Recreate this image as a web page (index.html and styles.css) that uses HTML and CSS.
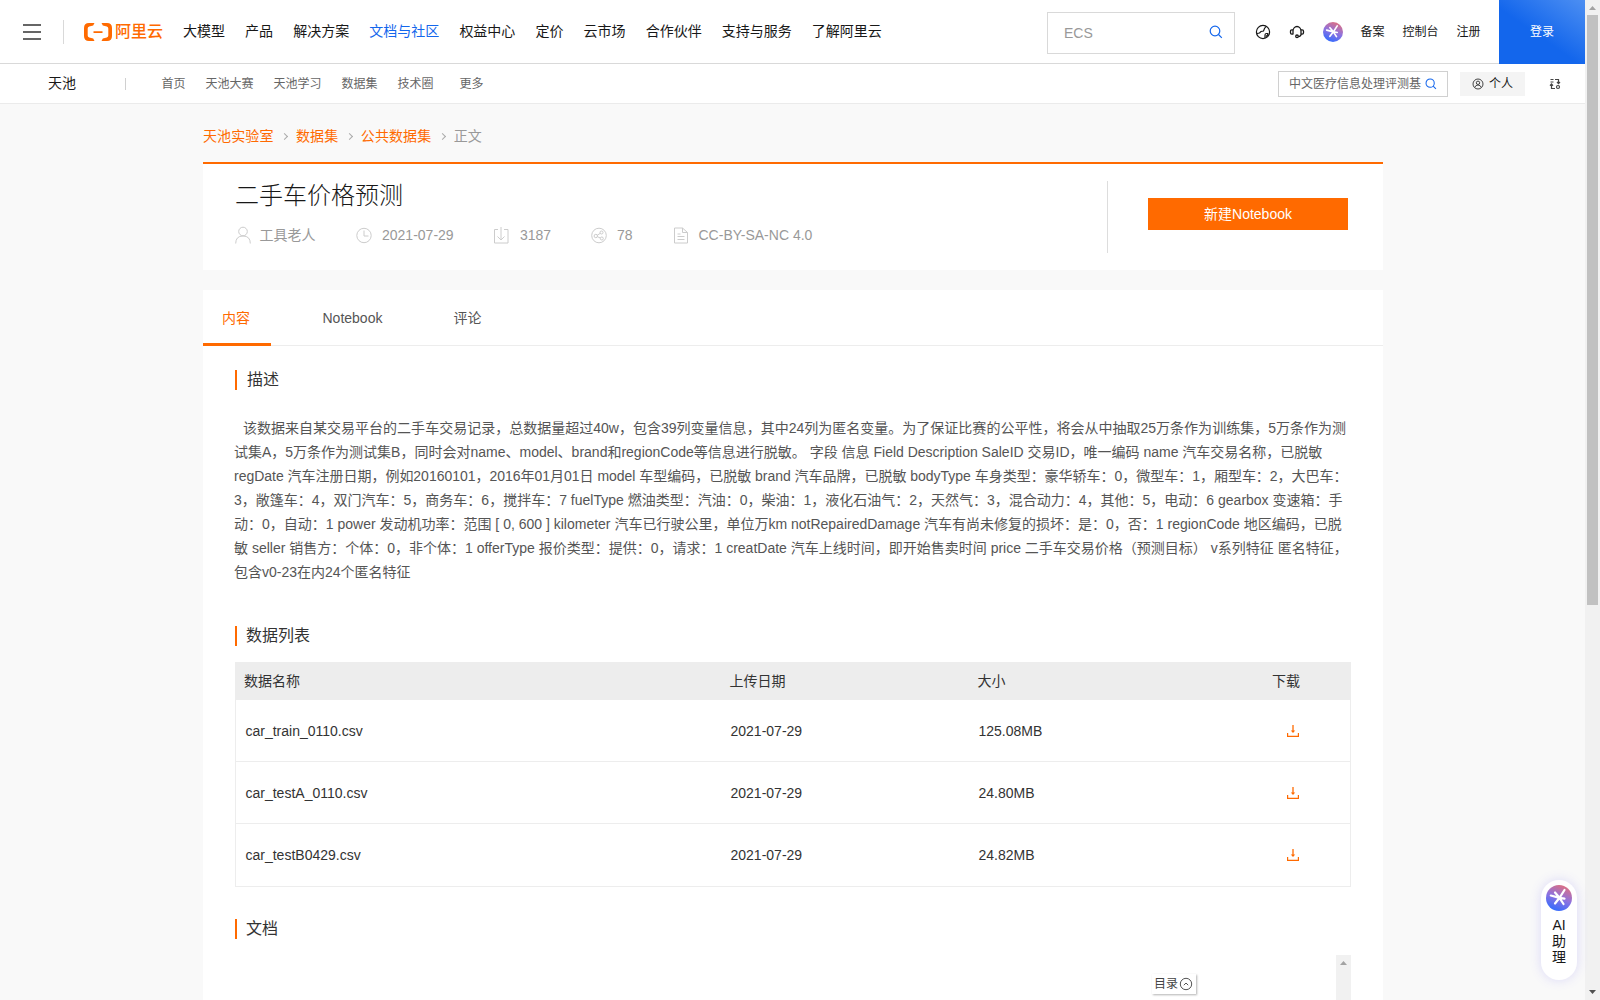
FILE: index.html
```html
<!DOCTYPE html>
<html lang="zh-CN">
<head>
<meta charset="utf-8">
<title>二手车价格预测</title>
<link rel="stylesheet" href="styles.css">
</head>
<body>
<svg class="defs" width="0" height="0">
  <defs>
    <linearGradient id="ai-fill" x1="0.3" y1="1" x2="0.7" y2="0">
      <stop offset="0" stop-color="#2f6bff"/>
      <stop offset="0.5" stop-color="#8d72e0"/>
      <stop offset="1" stop-color="#e0707f"/>
    </linearGradient>
    <symbol id="ai" viewBox="0 0 26 26">
      <circle cx="13" cy="13" r="13" fill="url(#ai-fill)"/>
      <path d="M18.500 5 13.500 12.800 9 18.500M4.800 10.500l8.700 2.300 5 .8M13.500 12.800 17.500 19M9 7.500l4.500 5.300" fill="none" stroke="#fff" stroke-width="2.200" stroke-linecap="round"/>
    </symbol>
    <symbol id="search" viewBox="0 0 14 14">
      <circle cx="6" cy="6" r="4.800" fill="none" stroke="currentColor" stroke-width="1.200"/>
      <path d="m9.500 9.500 3.300 3.300" stroke="currentColor" stroke-width="1.200"/>
    </symbol>
    <symbol id="download" viewBox="0 0 12 12">
      <path d="M6 0v7" fill="none" stroke="currentColor" stroke-width="1.300"/>
      <path d="M3.800 5.500h4.400L6 8z" fill="currentColor"/>
      <path d="M.6 8v3.300h10.800V8" fill="none" stroke="currentColor" stroke-width="1.200"/>
    </symbol>
  </defs>
</svg>

<div class="window">
  <div class="page">
    <header class="topbar">
      <div class="burger"><i></i><i></i><i></i></div>
      <div class="logo">
        <svg width="28" height="18" viewBox="0 0 28 18"><path d="M10.500 0H5Q0 0 0 5v8q0 5 5 5h5.500l-1.300-2.600-4-1Q3.700 14 3.700 12.500v-7Q3.700 4 5.200 3.600l4-1zM17.500 0H23q5 0 5 5v8q0 5-5 5h-5.500l1.300-2.600 4-1q1.500-.4 1.500-1.900v-7q0-1.500-1.500-1.900l-4-1zM9.500 8.200h9v1.700h-9z" fill="#ff6a00"/></svg>
        <b>阿里云</b>
      </div>
      <nav class="menu">
        <a>大模型</a><a>产品</a><a>解决方案</a><a class="on">文档与社区</a><a>权益中心</a><a>定价</a><a>云市场</a><a>合作伙伴</a><a>支持与服务</a><a>了解阿里云</a>
      </nav>
      <div class="search"><span>ECS</span><svg class="blue" width="14" height="14"><use href="#search"/></svg></div>
      <svg class="globe" width="16" height="16" viewBox="0 0 16 16" fill="none" stroke="#181818" stroke-width="1.200"><circle cx="8" cy="8" r="6.600"/><path d="M2 9.500 4.500 9 6 7.500 8.500 7 9.500 4.500 11 2.500M10 14v-3q0-1.500 1.500-1.500h1.200v1.500L11 12.500"/></svg>
      <svg class="headset" width="16" height="16" viewBox="0 0 16 16" fill="none" stroke="#181818" stroke-width="1.300"><path d="M4 10.500V7a4 4.500 0 0 1 8 0v3.500q0 1.800-2.500 2M4 5.800H2.800q-1.300 0-1.300 1.400v1.600q0 1.400 1.300 1.400H4M12 5.800h1.200q1.300 0 1.300 1.400v1.600q0 1.400-1.300 1.400H12"/><circle cx="8" cy="12.300" r="1.300"/></svg>
      <svg class="ai-top" width="20" height="20"><use href="#ai"/></svg>
      <nav class="account"><a>备案</a><a>控制台</a><a>注册</a></nav>
      <a class="login">登录</a>
    </header>

    <div class="subbar">
      <span class="product">天池</span><i class="sep"></i>
      <nav class="submenu"><a>首页</a><a>天池大赛</a><a>天池学习</a><a>数据集</a><a>技术圈</a><a class="more">更多</a></nav>
      <div class="subsearch"><span>中文医疗信息处理评测基</span><svg class="blue" width="12" height="12"><use href="#search"/></svg></div>
      <div class="person">
        <svg width="12" height="12" viewBox="0 0 12 12" fill="none" stroke="#444"><circle cx="6" cy="6" r="5"/><circle cx="6" cy="4.800" r="1.700"/><path d="M2.700 9.500Q3.500 7 6 7t3.300 2.500"/></svg>
        <span>个人</span>
      </div>
      <svg class="swap" width="12" height="12" viewBox="0 0 12 12" fill="none" stroke="#444" stroke-width="1.200"><path d="M1.500 1.500h3M1.500 4h3M6 1.500h3.500v4M8 4l1.500 1.700L11 4M2.500 6v4.500H6M1 7.700 2.500 6 4 7.700"/><circle cx="9" cy="9" r="1.500"/></svg>
    </div>

    <main>
      <div class="crumbs"><a>天池实验室</a><i></i><a>数据集</a><i></i><a>公共数据集</a><i></i><span>正文</span></div>

      <section class="summary">
        <div class="info">
          <h1>二手车价格预测</h1>
          <div class="meta">
            <div class="m1"><svg width="16" height="18" viewBox="0 0 16 18"><circle cx="8" cy="5.500" r="4.300"/><path d="M.7 17.500q0-7.500 7.300-7.500t7.300 7.500"/></svg>工具老人</div>
            <div class="m2"><svg width="16" height="18" viewBox="0 0 16 18"><circle cx="8" cy="9.500" r="7.200"/><path d="M8 4.500v5.500h4.500"/></svg>2021-07-29</div>
            <div class="m3"><svg width="16" height="18" viewBox="0 0 16 18"><path d="M5 3.500H1.500v13.500h13.500v-13.500h-4M8 1v12.500M4.500 10.500 8 14l3.500-3.500"/></svg>3187</div>
            <div class="m4"><svg width="16" height="18" viewBox="0 0 16 18"><circle cx="8" cy="9.500" r="7.300"/><circle cx="4.800" cy="10" r="1.700"/><circle cx="10.500" cy="6.500" r="1.500"/><circle cx="10.800" cy="12.500" r="1.500"/><path d="m6.300 9.200 3-1.900M6.400 10.700l3 1.300"/></svg>78</div>
            <div class="m5"><svg width="16" height="18" viewBox="0 0 16 18"><path d="M1.500 2h8l5 4.500V17h-13zM9.500 2v4.500h5M4.500 8h3M4.500 10.500h7M4.500 13.500h7"/></svg>CC-BY-SA-NC 4.0</div>
          </div>
        </div>
        <div class="action"><a class="create">新建Notebook</a></div>
      </section>

      <section class="detail">
        <nav class="tabs"><a class="on">内容</a><a class="t2">Notebook</a><a class="t3">评论</a></nav>

        <h2 class="h-desc">描述</h2>
        <p class="desc">
          <span class="first">该数据来自某交易平台的二手车交易记录，总数据量超过40w，包含39列变量信息，其中24列为匿名变量。为了保证比赛的公平性，将会从中抽取25万条作为训练集，5万条作为测</span>
          <span>试集A，5万条作为测试集B，同时会对name、model、brand和regionCode等信息进行脱敏。 字段 信息 Field Description SaleID 交易ID，唯一编码 name 汽车交易名称，已脱敏</span>
          <span class="tight">regDate 汽车注册日期，例如20160101，2016年01月01日 model 车型编码，已脱敏 brand 汽车品牌，已脱敏 bodyType 车身类型：豪华轿车：0，微型车：1，厢型车：2，大巴车：</span>
          <span>3，敞篷车：4，双门汽车：5，商务车：6，搅拌车：7 fuelType 燃油类型：汽油：0，柴油：1，液化石油气：2，天然气：3，混合动力：4，其他：5，电动：6 gearbox 变速箱：手</span>
          <span>动：0，自动：1 power 发动机功率：范围 [ 0, 600 ] kilometer 汽车已行驶公里，单位万km notRepairedDamage 汽车有尚未修复的损坏：是：0，否：1 regionCode 地区编码，已脱</span>
          <span>敏 seller 销售方：个体：0，非个体：1 offerType 报价类型：提供：0，请求：1 creatDate 汽车上线时间，即开始售卖时间 price 二手车交易价格（预测目标） v系列特征 匿名特征，</span>
          <span>包含v0-23在内24个匿名特征</span>
        </p>

        <h2 class="h-list">数据列表</h2>
        <div class="table">
          <div class="row head"><span>数据名称</span><span>上传日期</span><span>大小</span><span>下载</span></div>
          <div class="row"><span>car_train_0110.csv</span><span>2021-07-29</span><span>125.08MB</span><svg width="12" height="12"><use href="#download"/></svg></div>
          <div class="row"><span>car_testA_0110.csv</span><span>2021-07-29</span><span>24.80MB</span><svg width="12" height="12"><use href="#download"/></svg></div>
          <div class="row last"><span>car_testB0429.csv</span><span>2021-07-29</span><span>24.82MB</span><svg width="12" height="12"><use href="#download"/></svg></div>
        </div>

        <h2 class="h-doc">文档</h2>
        <div class="doc">
          <div class="toc"><span>目录</span><svg width="14" height="14" viewBox="0 0 14 14" fill="none" stroke="#555"><circle cx="7" cy="7" r="5.700"/><path d="M4.800 8.200 7 6l2.200 2.200"/></svg></div>
          <div class="inner-scroll"><svg width="7" height="4" viewBox="0 0 7 4"><path d="M0 4 3.500 0 7 4z" fill="#a3a3a3"/></svg></div>
        </div>
      </section>
    </main>
  </div>

  <div class="scrollbar">
    <svg width="7" height="4" viewBox="0 0 7 4"><path d="M0 4 3.500 0 7 4z" fill="#a3a3a3"/></svg>
    <div class="thumb"></div>
    <svg width="7" height="4" viewBox="0 0 7 4"><path d="M0 0h7L3.500 4z" fill="#505050"/></svg>
  </div>
</div>

<aside class="assistant"><svg width="26" height="26"><use href="#ai"/></svg><span>AI</span><span>助</span><span>理</span></aside>
</body>
</html>
```

FILE: styles.css
```css
* { box-sizing: border-box; }
body {
  margin: 0;
  height: 1000px;
  overflow: hidden;
  background: #f9f9f9;
  color: #181818;
  font: 14px/20px "Liberation Sans", "Noto Sans CJK SC", sans-serif;
}
svg { display: block; flex: none; }
.defs { position: absolute; }
h1, h2, p { margin: 0; font-weight: 400; }
a, span { white-space: nowrap; }

.window { display: flex; height: 1000px; overflow: hidden; }
.page { width: 1585px; flex: none; }

.topbar {
  display: flex;
  align-items: center;
  height: 64px;
  background: #fff;
  border-bottom: 1px solid #d9d9d9;
  padding-left: 23px;
}
.burger {
  display: flex;
  flex-direction: column;
  gap: 5px;
  width: 41px;
  height: 24px;
  justify-content: center;
  border-right: 1px solid #d9d9d9;
}
.burger i { width: 18px; height: 2px; background: #666; }
.logo { display: flex; align-items: center; width: 119px; padding-left: 20px; gap: 3px; }
.logo b { font-size: 16px; color: #ff6a00; font-weight: 500; }
.menu { display: flex; gap: 20.100px; width: 864px; line-height: 18px; padding-bottom: 1px; }
.menu .on { color: #1366ec; }
.blue { color: #1366ec; }
.search {
  display: flex;
  align-items: center;
  justify-content: space-between;
  width: 188px;
  height: 42px;
  margin-top: 2px;
  border: 1px solid #d9d9d9;
  padding: 0 11px 2px 16px;
  color: #999;
}
.search span { font-size: 14px; padding-top: 2px; }
.globe { margin-left: 20px; }
.headset { margin-left: 18px; }
.ai-top { margin-left: 18px; }
.account { display: flex; gap: 18px; margin-left: 17.500px; width: 138.500px; font-size: 12px; }
.login {
  width: 86px;
  height: 64px;
  margin-bottom: -1px;
  flex: none;
  background: linear-gradient(35deg, #1366ec 45%, #4d8ff2);
  color: #fff;
  font-size: 12px;
  line-height: 64px;
  text-align: center;
}

.subbar {
  display: flex;
  align-items: center;
  height: 40px;
  background: #fff;
  border-bottom: 1px solid #ebebeb;
  padding-left: 48px;
  font-size: 12px;
}
.product { width: 77px; font-size: 14px; line-height: 18px; padding-bottom: 1px; }
.sep { width: 1px; height: 12px; background: #d0d0d0; }
.submenu { display: flex; gap: 20px; margin-left: 35.500px; width: 1116.500px; color: #666; }
.submenu .more { margin-left: 6px; }
.subsearch {
  display: flex;
  align-items: center;
  justify-content: space-between;
  width: 170px;
  height: 26px;
  border: 1px solid #d0d0d0;
  padding: 0 10px;
  color: #666;
}
.person {
  display: flex;
  align-items: center;
  justify-content: center;
  gap: 5px;
  width: 65px;
  height: 24px;
  margin-left: 12px;
  background: #f4f4f4;
}
.swap { margin-left: 24px; }

main { margin-left: 203px; width: 1180px; }
.crumbs { display: flex; height: 58px; padding-top: 22px; color: #999; }
.crumbs a { color: #ff6a00; letter-spacing: .1px; }
.crumbs i {
  width: 5px;
  height: 5px;
  margin: 8px 9px 0 8.500px;
  border: solid #aaa;
  border-width: 1px 1px 0 0;
  transform: rotate(45deg);
}
.summary {
  display: flex;
  height: 108px;
  background: #fff;
  border-top: 2px solid #ff6a00;
}
.info { width: 904px; padding: 16px 0 0 32px; }
h1 { font-size: 24px; line-height: 32px; color: #181818; font-weight: 300; }
.meta { display: flex; margin-top: 13px; color: #999; }
.meta div { display: flex; gap: 10px; align-items: center; height: 20px; }
.meta svg { fill: none; stroke: #ccc; stroke-width: 1; }
.meta .m1 { width: 121px; gap: 8.500px; }
.m2 { width: 137px; }
.meta .m3 { width: 98px; gap: 11px; }
.m4 { width: 81.500px; }
.action {
  height: 72px;
  margin-top: 17px;
  padding: 17px 0 0 40px;
  border-left: 1px solid #ddd;
}
.create {
  display: block;
  width: 200px;
  height: 32px;
  background: #ff6a00;
  color: #fff;
  line-height: 32px;
  text-align: center;
}

.detail { height: 710px; margin-top: 20px; background: #fff; }
.tabs { display: flex; height: 56px; border-bottom: 1px solid #ededed; line-height: 56px; color: #555; }
.tabs .on { width: 68px; height: 56px; padding-left: 19px; color: #ff6a00; border-bottom: 3px solid #ff6a00; }
.t2 { width: 131px; margin-left: 51.500px; }
h2 {
  height: 20px;
  margin-left: 32px;
  padding-left: 9px;
  border-left: 2px solid #ff6a00;
  font-size: 16px;
  line-height: 20px;
  color: #333;
}
.h-desc { margin-top: 24px; padding-left: 10px; }
.desc { margin: 26px 0 42px 31px; color: #555; }
.desc span { display: block; height: 24px; line-height: 24px; }
.desc .first { padding-left: 9px; letter-spacing: .01px; }
.desc .tight { letter-spacing: -.02px; }
.table { margin: 16px 0 0 32px; width: 1116px; border: 1px solid #ededed; color: #333; }
.row {
  display: grid;
  grid-template-columns: 485px 248px 308.500px 1fr;
  align-items: center;
  height: 62px;
  padding-left: 9.500px;
  border-bottom: 1px solid #ededed;
}
.row svg { color: #ff6a00; margin-top: 1px; }
.row.head { grid-template-columns: 485.500px 248px 294.500px 1fr; height: 37px; padding-left: 8px; background: #ededed; }
.row.last { height: 62px; border-bottom: 0; }
.row.last svg { margin-top: 0; }
.h-doc { margin-top: 32px; }
.doc { display: flex; justify-content: space-between; margin: 16px 32px 0 949px; height: 45px; }
.toc {
  display: flex;
  align-items: center;
  gap: 1px;
  width: 44px;
  height: 20px;
  margin-top: 19px;
  padding-left: 2px;
  color: #444;
  font-size: 12px;
  box-shadow: 1px 1px 2px rgba(0, 0, 0, .3);
}
.inner-scroll { width: 15px; background: #f1f1f1; padding: 6px 0 0 4px; }

.scrollbar {
  display: flex;
  flex-direction: column;
  align-items: center;
  width: 15px;
  background: #f1f1f1;
  padding: 6px 0;
}
.thumb { width: 11px; height: 590px; margin: 5px 0 auto; background: #c1c1c1; }

.assistant {
  position: absolute;
  left: 1541px;
  top: 880px;
  display: flex;
  flex-direction: column;
  align-items: center;
  width: 36px;
  height: 100px;
  padding-top: 5px;
  border-radius: 18px;
  background: #fff;
  box-shadow: 0 0 12px rgba(100, 90, 240, .2);
  line-height: 16px;
}
.assistant svg { margin-bottom: 6px; }
```
